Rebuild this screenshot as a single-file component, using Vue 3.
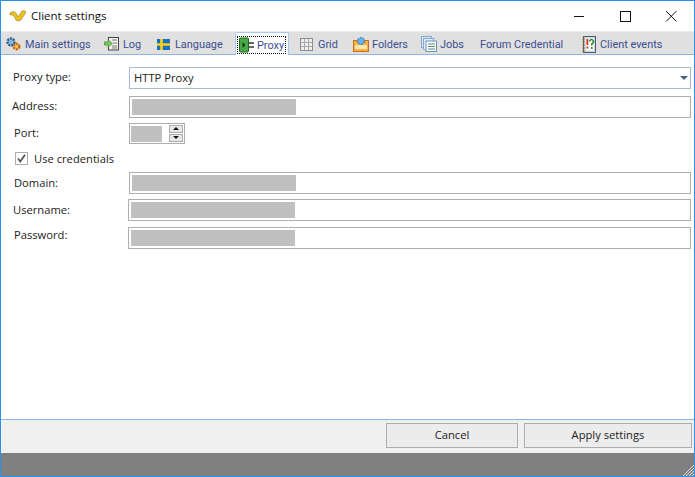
<script setup>
const tabs = [
  { id: 'main', label: 'Main settings', w: 98 },
  { id: 'log', label: 'Log', w: 52 },
  { id: 'lang', label: 'Language', w: 81 },
  { id: 'proxy', label: 'Proxy', w: 54, active: true },
  { id: 'grid', label: 'Grid', w: 54 },
  { id: 'folders', label: 'Folders', w: 68 },
  { id: 'jobs', label: 'Jobs', w: 51 },
  { id: 'forum', label: 'Forum Credential', w: 109 },
  { id: 'events', label: 'Client events', w: 96 }
]
</script>

<template>
  <div class="window">
    <header class="title">
      <svg class="logo" width="18" height="12" viewBox="0 0 18 12"><path d="M1 3 Q4 0 7 3 L9 7 L13 1 Q16 0 17 2 L12 10 Q9 12 7 10 L5 6 Q3 4 1 5Z" fill="#f2c21a" stroke="#8a7a30" stroke-width=".6"/></svg>
      <span class="title-text">Client settings</span>
      <div class="controls">
        <svg width="46" height="30" viewBox="0 0 46 30"><path d="M18 15.5H28" stroke="#111" fill="none"/></svg>
        <svg width="46" height="30" viewBox="0 0 46 30"><rect x="18.5" y="10.5" width="10" height="10" stroke="#111" fill="none"/></svg>
        <svg width="46" height="30" viewBox="0 0 46 30"><path d="M18 10L28.500 20.500M28.500 10L18 20.500" stroke="#111" fill="none"/></svg>
      </div>
    </header>

    <nav class="tabs">
      <div v-for="t in tabs" :key="t.id" class="tab" :class="{ active: t.active }" :style="{ width: t.w + 'px' }">
        <div class="tab-inner">
          <span v-if="t.id !== 'forum'" class="icon">
            <svg v-if="t.id === 'main'" width="17" height="16" viewBox="0 0 17 16"><circle cx="6" cy="6" r="3.500" fill="#8fb8dc" stroke="#2b5c8c" stroke-width="2.400" stroke-dasharray="2 1"/><circle cx="11.500" cy="10.500" r="2.800" fill="#f8c050" stroke="#c06a10" stroke-width="2.400" stroke-dasharray="2 1"/></svg>
            <svg v-else-if="t.id === 'log'" width="16" height="14" viewBox="0 0 16 14"><rect x="4.500" y=".5" width="10" height="12.500" fill="#f2f2ea" stroke="#444"/><path d="M8 3h5M9 6h4M8 9h5M8 11h5" stroke="#777"/><path d="M0 5h4V2.500l4.500 4-4.500 4V8H0z" fill="#7cc860" stroke="#3a7a2a" stroke-width=".6"/></svg>
            <svg v-else-if="t.id === 'lang'" width="13" height="11" viewBox="0 0 13 11"><rect width="13" height="11" fill="#1b6fc0"/><path d="M0 5.500h13M4.500 0v11" stroke="#fcd116" stroke-width="2.600"/></svg>
            <svg v-else-if="t.id === 'proxy'" width="15" height="16" viewBox="0 0 15 16"><rect x=".5" y="1" width="9" height="14" rx="1" fill="#4aa848" stroke="#1d6a20"/><path d="M3.500 5l3 3-3 3z" fill="#0c3a10"/><path d="M10 6h5M10 10h5" stroke="#666" stroke-width="2"/></svg>
            <svg v-else-if="t.id === 'grid'" width="13" height="13" viewBox="0 0 13 13"><rect x=".5" y=".5" width="12" height="12" fill="#eee" stroke="#8c8c8c"/><path d="M4.500 1v11M8.500 1v11M1 4.500h11M1 8.500h11" stroke="#aaa"/></svg>
            <svg v-else-if="t.id === 'folders'" width="16" height="16" viewBox="0 0 16 16"><rect x=".5" y="4.500" width="15" height="11" fill="#f8b040" stroke="#c87018"/><rect x="2" y="9" width="12" height="4" fill="#f8e8b0"/><circle cx="8" cy="5" r="3.500" fill="#6cb0e8" stroke="#2878c0" stroke-dasharray="2 1"/></svg>
            <svg v-else-if="t.id === 'jobs'" width="16" height="16" viewBox="0 0 16 16"><rect x=".5" y=".5" width="10" height="11" fill="#d8e8f8" stroke="#88a8d0"/><rect x="2.500" y="2.500" width="10" height="11" fill="#e0ecf8" stroke="#88a8d0"/><rect x="5" y="5" width="10.500" height="10.500" fill="#fff" stroke="#6a90c0"/><path d="M7 8h7M7 10.500h7M7 13h7" stroke="#5a8a70"/></svg>
            <svg v-else width="15" height="17" viewBox="0 0 15 17"><rect x="2.500" y=".5" width="12" height="16" fill="#c8d8e8" stroke="#556"/><rect x="5" y="2.500" width="8" height="12" fill="#fff"/><path d="M1 3h3M1 6h3M1 9h3M1 12h3M1 15h3" stroke="#a08020"/><rect x="5.500" y="3" width="1.800" height="6" fill="#d83020"/><rect x="5.500" y="10.500" width="1.800" height="2" fill="#d83020"/><path d="M8.500 5.500Q9 3.500 10.500 3.500T12.500 5.500Q12.500 7 10.800 8V9.500M10.800 11v2" stroke="#1c8a30" stroke-width="1.600" fill="none"/></svg>
          </span>
          <span class="tab-label">{{ t.label }}</span>
        </div>
      </div>
    </nav>

    <main class="form">
      <div class="row row-type">
        <label class="lbl l-type">Proxy type:</label>
        <div class="box select">
          <span class="select-text">HTTP Proxy</span>
          <i class="arrow"></i>
        </div>
      </div>
      <div class="row row-address">
        <label class="lbl l-address">Address:</label>
        <div class="box"><span class="mask"></span></div>
      </div>
      <div class="row row-port">
        <label class="lbl l-port">Port:</label>
        <div class="box port">
          <span class="mask small"></span>
          <div class="spin"><b class="up"></b><b class="down"></b></div>
        </div>
      </div>
      <div class="check">
        <span class="checkbox"><svg width="11" height="11" viewBox="0 0 11 11"><path d="M2 5.500L4.300 8.500L9 1.800" stroke="#555" stroke-width="1.800" fill="none"/></svg></span>
        <span>Use credentials</span>
      </div>
      <div class="row row-domain">
        <label class="lbl l-port">Domain:</label>
        <div class="box"><span class="mask"></span></div>
      </div>
      <div class="row row-user">
        <label class="lbl l-type">Username:</label>
        <div class="box wide"><span class="mask"></span></div>
      </div>
      <div class="row row-pass">
        <label class="lbl l-port">Password:</label>
        <div class="box wide"><span class="mask"></span></div>
      </div>
    </main>

    <footer class="actions">
      <button class="btn cancel">Cancel</button>
      <button class="btn apply">Apply settings</button>
    </footer>
    <div class="status">
      <svg class="grip" width="12" height="12" viewBox="0 0 12 12"><path d="M12 1L1 12M12 4L4 12M12 7L7 12M12 10L10 12" stroke="#ddd"/></svg>
    </div>
  </div>
</template>

<style scoped>
.window {
  box-sizing: border-box;
  width: 695px;
  height: 477px;
  border: 1px solid #2b90e8;
  display: flex;
  flex-direction: column;
  background: #fff;
  font: 11.2px "Open Sans", "Noto Sans", sans-serif;
  color: #222;
  overflow: hidden;
}
.title {
  height: 30px;
  flex: none;
  display: flex;
  align-items: center;
  padding-left: 8px;
  font-size: 11.500px;
  color: #111;
}
.title-text { margin-top: -2px; }
.logo { margin-right: 4px; }
.controls { margin-left: auto; display: flex; height: 30px; }
.tabs {
  box-sizing: border-box;
  height: 24px;
  flex: none;
  background: #e0e0e0;
  border-top: 1px solid #ececec;
  border-bottom: 1px solid #8db4e2;
  display: flex;
  padding-left: 3px;
  color: #3b4f93;
  font: 10.900px Roboto, "Open Sans", sans-serif;
}
.tab {
  flex: none;
  box-sizing: border-box;
  display: flex;
  align-items: center;
  white-space: nowrap;
  padding-left: 1px;
}
.tab:nth-child(8) { padding-left: 10px; }
.tab-inner { display: flex; align-items: center; gap: 3px; margin-top: 2px; }
.tab.active {
  background: #fff;
  border: 1px solid #a9c8ea;
  border-bottom: 0;
  border-radius: 2px 2px 0 0;
  height: 23px;
  padding: 0 0 0 2px;
  margin-right: 8px;
}
.tab.active .tab-inner { outline: 1px dotted #111; gap: 2px; padding-right: 1px; height: 16px; }
.icon { display: flex; width: 17px; justify-content: center; flex: none; }
.form {
  flex: 1;
  display: flex;
  flex-direction: column;
  min-height: 0;
}
.row { display: flex; height: 22px; align-items: center; }
.row-type { margin-top: 12px; }
.row-address { margin-top: 7px; }
.row-port { margin-top: 5px; height: 21px; }
.row-domain { margin-top: 7px; }
.row-user { margin-top: 5px; }
.row-pass { margin-top: 6px; }
.lbl { width: 128px; box-sizing: border-box; flex: none; margin-top: -4px; color: #222; }
.row-port .lbl, .row-domain .lbl, .row-user .lbl { margin-top: -2px; }
.row-pass .lbl { margin-top: -8px; }
.l-type { padding-left: 12px; }
.l-address { padding-left: 11px; }
.l-port { padding-left: 13px; }
.box {
  box-sizing: border-box;
  width: 562px;
  height: 22px;
  border: 1px solid #adadad;
  background: #fff;
  display: flex;
  align-items: center;
  padding-left: 2px;
}
.box.wide { width: 563px; margin-left: -1px; }
.select {
  border-color: #abb8d0;
  padding: 0 2px 0 4px;
  justify-content: space-between;
  color: #222;
}
.select-text { margin-top: -2px; }
.arrow {
  width: 0;
  height: 0;
  border: 4px solid transparent;
  border-top: 4px solid #4a5f80;
  border-bottom: 0;
}
.mask { width: 164px; height: 16px; background: #c0c0c0; display: block; }
.mask.small { width: 31px; margin-left: -1px; }
.port { width: 56px; height: 21px; }
.spin {
  margin-left: 7px;
  width: 14px;
  display: flex;
  flex-direction: column;
  gap: 1px;
}
.spin b {
  background: #e8e8e8;
  border: 1px solid #adadad;
  box-sizing: border-box;
  height: 8px;
  position: relative;
}
.spin b::after {
  content: "";
  position: absolute;
  left: 3px;
  top: 1px;
  border: 3px solid transparent;
}
.spin .up::after { border-bottom: 3px solid #111; border-top: 0; }
.spin .down::after { border-top: 3px solid #111; border-bottom: 0; }
.check {
  display: flex;
  align-items: center;
  height: 14px;
  margin: 7px 0 0 14px;
  gap: 6px;
}
.checkbox {
  box-sizing: border-box;
  width: 13px;
  height: 13px;
  border: 1px solid #adadad;
  display: flex;
  align-items: center;
  justify-content: center;
}
.actions {
  flex: none;
  height: 34px;
  box-sizing: border-box;
  background: #f0f0f0;
  border-top: 1px solid #8db4e2;
  display: flex;
  justify-content: flex-end;
  align-items: flex-start;
  gap: 6px;
  padding: 3px 2px 0 0;
}
.btn {
  box-sizing: border-box;
  height: 25px;
  background: #ececec;
  border: 1px solid #adadad;
  font: inherit;
  color: #222;
  padding: 0 0 2px;
}
.cancel { width: 132px; }
.apply { width: 168px; }
.status {
  flex: none;
  height: 23px;
  background: #808080;
  display: flex;
  justify-content: flex-end;
  align-items: flex-end;
}
.grip { display: block; }
</style>
